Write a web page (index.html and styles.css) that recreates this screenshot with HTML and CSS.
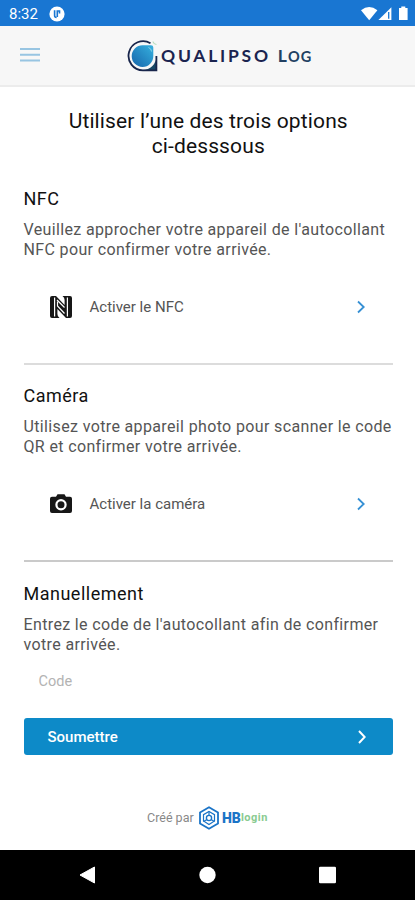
FILE: index.html
```html
<!DOCTYPE html>
<html lang="fr">
<head>
<meta charset="utf-8">
<meta name="viewport" content="width=device-width, initial-scale=1">
<title>Qualipso Log</title>
<link rel="stylesheet" href="styles.css">
</head>
<body>
<div class="statusbar">
  <span class="clock">8:32</span>
  <svg class="notif" width="16" height="16" viewBox="0 0 16 16"><circle cx="8" cy="8" r="7.6" fill="#fff"/><path d="M5.600 4.200V9.500Q5.600 11.500 7.600 11.500M8.300 11V5h2.200v2.500" fill="none" stroke="#1976d2" stroke-width="1.6"/></svg>
  <svg class="signals" width="48" height="16" viewBox="0 0 48 16"><path d="M0 4.3Q8.200-2.200 16.400 4.300L8.200 14.200Z" fill="#fff"/><path d="M30.400 1.200V14H17.400Z" fill="#fff"/><path d="M27.700 6v6.800" stroke="#1976d2" stroke-width="1.300"/><path d="M38 2h2.300V.5h4V2h2.300v12H38z" fill="#fff"/></svg>
</div>
<header class="header">
  <svg class="menu" width="20" height="16" viewBox="0 0 20 16"><path d="M0 2h20M0 7.700h20M0 13.500h20" stroke="#98c5e2" stroke-width="2"/></svg>
  <div class="brand">
    <svg width="34" height="34" viewBox="0 0 34 34">
      <defs><linearGradient id="drop" x1="1" y1="0" x2="0" y2="1"><stop offset="0" stop-color="#36b1df"/><stop offset="1" stop-color="#1665ab"/></linearGradient></defs>
      <path d="M16 31.800H30.800V17H16Z" fill="#164765"/>
      <circle cx="16.500" cy="17" r="14" fill="#f7f7f7"/>
      <path d="M24.500 4.200A14.600 14.600 0 1 0 17 31.400H30.400V17" fill="none" stroke="#18254b" stroke-width="1.800"/>
      <path d="M16.500 6.300H25Q27.300 6.300 27.300 8.600V17A10.800 10.800 0 1 1 16.500 6.300Z" fill="url(#drop)"/>
      <path d="M22.500 8.500q3 1 3 4" fill="none" stroke="#8bd4ea" stroke-width="1"/>
      <path d="M27 2.500q.5 2.500 3.500 3" fill="none" stroke="#b9dfbd" stroke-width="1.200"/>
    </svg>
    <span class="brand-name">QUALIPSO</span><span class="brand-log">L<small>OG</small></span>
  </div>
</header>
<main class="content">
  <h1>Utiliser l’une des trois options<br>ci-desssous</h1>
  <section>
    <h2>NFC</h2>
    <p>Veuillez approcher votre appareil de l'autocollant<br>NFC pour confirmer votre arrivée.</p>
    <div class="option">
      <svg class="icon" width="22" height="22" viewBox="0 0 22 22"><path d="M2 0H6L14.600 9V4Q14.600 1.500 12.500 0H20Q22 0 22 2V20Q22 22 20 22H16L7.400 13V18Q7.400 20.500 9.500 22H2Q0 22 0 20V2Q0 0 2 0Z" fill="#171717"/><path d="M4.600 1.500V20.500M17.400 1.500V20.500M7.500 5.500V10L14.500 17.500" stroke="#fff" stroke-width="1.200" fill="none"/><path d="M7 4 14.500 11.500" stroke="#fff" stroke-width="1.200"/></svg>
      <span>Activer le NFC</span>
      <svg class="chevron" width="8" height="14" viewBox="0 0 8 14"><path d="M1 1.500 6.700 7 1 12.500" fill="none" stroke="#3690d4" stroke-width="1.800"/></svg>
    </div>
  </section>
  <section class="second">
    <h2>Caméra</h2>
    <p>Utilisez votre appareil photo pour scanner le code<br>QR et confirmer votre arrivée.</p>
    <div class="option">
      <svg class="icon" width="22" height="22" viewBox="0 0 22 22"><path d="M2 3.800H6L7.500 1.300H14.500L16 3.800H20Q22 3.800 22 5.800V18Q22 20 20 20H2Q0 20 0 18V5.800Q0 3.800 2 3.800Z" fill="#171717"/><circle cx="11" cy="11.800" r="4.600" fill="#171717" stroke="#fff" stroke-width="2.200"/></svg>
      <span>Activer la caméra</span>
      <svg class="chevron" width="8" height="14" viewBox="0 0 8 14"><path d="M1 1.500 6.700 7 1 12.500" fill="none" stroke="#3690d4" stroke-width="1.800"/></svg>
    </div>
  </section>
  <section class="manual">
    <h2>Manuellement</h2>
    <p>Entrez le code de l'autocollant afin de confirmer<br>votre arrivée.</p>
    <div class="code">Code</div>
    <button class="submit"><span>Soumettre</span><svg class="chevron" width="8" height="14" viewBox="0 0 8 14"><path d="M1 1 6.700 7 1 13" fill="none" stroke="#fff" stroke-width="2"/></svg></button>
  </section>
</main>
<footer class="credit">
  <span class="by">Créé par</span>
  <svg width="20" height="24" viewBox="0 0 20 24"><path d="M10 1.300 19 6.500V17.500L10 22.700 1 17.500V6.500Z" fill="none" stroke="#1b74c7" stroke-width="1.800"/><path d="M10 5.500 15.500 8.700V15L10 18.500 4.500 15V8.700Z" fill="none" stroke="#1b74c7" stroke-width="1.200"/><path d="M10 5.500V10M4.500 15.500 8 13.500M15.500 15.500 12 13.500" stroke="#1b74c7" stroke-width="1.200"/><circle cx="10" cy="12" r="2.600" fill="#fff" stroke="#1b74c7" stroke-width="1.400"/></svg>
  <span class="hb">HB</span><span class="login">login</span>
</footer>
<nav class="navbar">
  <svg width="17" height="18" viewBox="0 0 17 18"><path d="M1 9 15.500 1V17Z" fill="#fff" stroke="#fff" stroke-linejoin="round"/></svg>
  <svg width="17" height="18" viewBox="0 0 17 18"><circle cx="8.500" cy="9" r="8.200" fill="#fff"/></svg>
  <svg width="17" height="18" viewBox="0 0 17 18"><rect y=".700" width="17" height="16.600" rx="1.300" fill="#fff"/></svg>
</nav>
</body>
</html>
```
FILE: styles.css
```css
* { box-sizing: border-box; }
body {
  margin: 0;
  width: 415px;
  height: 900px;
  overflow: hidden;
  display: flex;
  flex-direction: column;
  background: #fff;
  font-family: Roboto, "Liberation Sans", sans-serif;
  color: #111;
}
svg { display: block; flex: none; }
.statusbar {
  height: 26px;
  flex: none;
  display: flex;
  align-items: center;
  padding: 2px 6px 0 9px;
  background: #1976d2;
  color: #fff;
}
.clock { width: 40px; font-size: 15px; }
.signals { margin-left: auto; }
.header {
  height: 61px;
  flex: none;
  display: flex;
  align-items: center;
  padding: 0 20px;
  background: #f7f7f7;
  border-bottom: 2px solid #ececec;
}
.menu { margin-top: -2px; }
.brand {
  display: flex;
  align-items: center;
  margin-left: 86px;
  color: #1b2450;
  font-family: Lato, sans-serif;
  font-weight: 700;
  font-size: 17.500px;
}
.brand-name { margin-left: 1px; letter-spacing: 2.750px; }
.brand-log { margin-left: 7px; letter-spacing: 1px; color: #214062; }
.brand-log small { font-size: 14.500px; }
.content { padding: 22px 22px 0 23.500px; height: 699px; flex: none; }
h1 {
  margin: 0;
  height: 77px;
  text-align: center;
  font-size: 21px;
  line-height: 25px;
  font-weight: 400;
  letter-spacing: .13px;
}
h2 {
  margin: 0;
  height: 34px;
  font-size: 18px;
  line-height: 25px;
  font-weight: 400;
  letter-spacing: .5px;
}
p {
  margin: 0;
  font-size: 16px;
  line-height: 20px;
  letter-spacing: .36px;
  color: #555;
  white-space: nowrap;
}
section:not(.manual) { border-bottom: 2px solid #dcdcdc; margin-bottom: 18px; height: 179px; }
section.second { border-bottom: 2px solid #cacaca; height: 179px; margin-bottom: 19px; }
.option {
  display: flex;
  align-items: center;
  height: 22px;
  margin-top: 36px;
  padding: 0 28px 0 26px;
  font-size: 15px;
  color: #555;
}
.option span { margin-left: 18px; }
.chevron { margin-left: auto; }
.code {
  height: 37px;
  margin: 8px 0 18px;
  padding-left: 15px;
  line-height: 37px;
  font-size: 14.500px;
  color: #b3b3b3;
}
.submit {
  display: flex;
  align-items: center;
  width: 369.500px;
  height: 37px;
  padding: 0 27px 0 24px;
  border: 0;
  border-radius: 3px;
  background: #0d8ac8;
  color: #fff;
  font: 500 15px Roboto, sans-serif;
}
.credit {
  height: 64px;
  flex: none;
  display: flex;
  align-items: center;
  padding: 0 0 1px 147px;
}
.by { width: 52px; font-size: 12.500px; color: #888; }
.hb { margin-left: 3px; font-size: 14px; font-weight: 900; color: #1b74c7; }
.login { font-size: 11px; font-weight: 700; letter-spacing: .5px; color: #8acb91; }
.navbar {
  height: 50px;
  flex: none;
  display: flex;
  align-items: center;
  justify-content: space-between;
  padding: 0 79px;
  background: #000;
}
```
